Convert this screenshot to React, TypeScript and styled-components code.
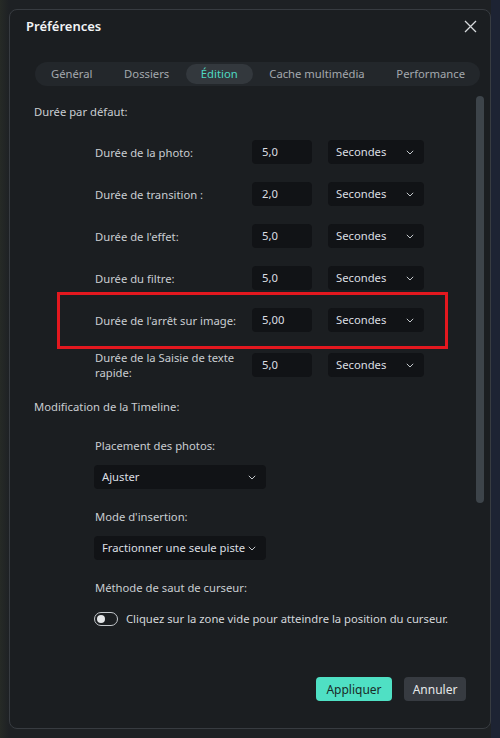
import { FC } from "react";
import styled, { createGlobalStyle } from "styled-components";

const GlobalStyle = createGlobalStyle`
    html, body {
        margin: 0;
        padding: 0;
        background: linear-gradient(90deg, #262a26 0px, #1e2124 9px, #1e2124 491px, #1d2333 491px);
        font-family: "Noto Sans", "Open Sans", sans-serif;
    }
    * {
        box-sizing: border-box;
    }
`;

type Duration = {
    label: string;
    value: string;
    highlighted?: boolean;
};

const durations: Duration[] = [
    { label: "Durée de la photo:", value: "5,0" },
    { label: "Durée de transition :", value: "2,0" },
    { label: "Durée de l'effet:", value: "5,0" },
    { label: "Durée du filtre:", value: "5,0" },
    { label: "Durée de l'arrêt sur image:", value: "5,00", highlighted: true },
    { label: "Durée de la Saisie de texte rapide:", value: "5,0" },
];

const tabs = ["Général", "Dossiers", "Édition", "Cache multimédia", "Performance"];

const Chevron: FC = () => (
    <svg width="8" height="5" viewBox="0 0 8 5" fill="none">
        <path d="M0.8 0.8 L4 4 L7.2 0.8" stroke="#c4c8cc" strokeWidth="1" />
    </svg>
);

const App: FC = () => {
    return (
        <>
            <GlobalStyle />
            <Page>
                <Dialog>
                    <Header>
                        <Title>Préférences</Title>
                        <CloseButton aria-label="Fermer">
                            <svg width="13" height="13" viewBox="0 0 13 13">
                                <path
                                    d="M1 1 L12 12 M12 1 L1 12"
                                    stroke="#d6d9dc"
                                    strokeWidth="1.3"
                                />
                            </svg>
                        </CloseButton>
                    </Header>

                    <TabBar>
                        {tabs.map((tab) => (
                            <Tab key={tab} $active={tab === "Édition"}>
                                {tab}
                            </Tab>
                        ))}
                    </TabBar>

                    <Body>
                        <Content>
                            <SectionTitle>Durée par défaut:</SectionTitle>
                            <DurationList>
                                {durations.map((d) => (
                                    <DurationRow key={d.label} $highlighted={d.highlighted}>
                                        <DurationLabel>{d.label}</DurationLabel>
                                        <NumberInput>{d.value}</NumberInput>
                                        <SmallSelect>
                                            <span>Secondes</span>
                                            <Chevron />
                                        </SmallSelect>
                                    </DurationRow>
                                ))}
                            </DurationList>

                            <SectionTitle $spaced>Modification de la Timeline:</SectionTitle>
                            <Field $first>
                                <FieldLabel>Placement des photos:</FieldLabel>
                                <WideSelect>
                                    <span>Ajuster</span>
                                    <Chevron />
                                </WideSelect>
                            </Field>
                            <Field>
                                <FieldLabel>Mode d'insertion:</FieldLabel>
                                <WideSelect>
                                    <span>Fractionner une seule piste</span>
                                    <Chevron />
                                </WideSelect>
                            </Field>
                            <Field>
                                <FieldLabel>Méthode de saut de curseur:</FieldLabel>
                                <ToggleRow>
                                    <Toggle />
                                    <span>Cliquez sur la zone vide pour atteindre la position du curseur.</span>
                                </ToggleRow>
                            </Field>
                        </Content>
                        <ScrollTrack>
                            <ScrollThumb />
                        </ScrollTrack>
                    </Body>

                    <Footer>
                        <PrimaryButton>Appliquer</PrimaryButton>
                        <SecondaryButton>Annuler</SecondaryButton>
                    </Footer>
                </Dialog>
            </Page>
        </>
    );
};

export default App;

const Page = styled.div`
    width: 500px;
    height: 738px;
    padding: 9px;
`;

const Dialog = styled.div`
    width: 482px;
    height: 720px;
    background: #1b1e21;
    border: 1px solid #383c41;
    border-radius: 8px;
    display: flex;
    flex-direction: column;
    color: #c9cdd1;
    font-size: 11.25px;
    line-height: 16px;
`;

const Header = styled.div`
    height: 32px;
    display: flex;
    align-items: center;
    justify-content: space-between;
    padding: 0 12px 0 16px;
`;

const Title = styled.div`
    font-size: 13px;
    font-weight: 600;
    color: #f1f3f5;
`;

const CloseButton = styled.button`
    background: none;
    border: none;
    padding: 0;
    width: 16px;
    height: 16px;
    display: flex;
    align-items: center;
    justify-content: center;
`;

const TabBar = styled.div`
    margin: 20px 10px 0 25px;
    height: 24px;
    background: #23272b;
    border-radius: 12px;
    display: flex;
    align-items: center;
    justify-content: space-between;
    padding: 0 0 0 1px;
`;

const Tab = styled.div<{ $active?: boolean }>`
    height: 20px;
    padding: 0 15px;
    border-radius: 10px;
    display: flex;
    align-items: center;
    white-space: nowrap;
    color: ${(p) => (p.$active ? "#4fd9c4" : "#a3a9ae")};
    background: ${(p) => (p.$active ? "#33383d" : "transparent")};
`;

const Body = styled.div`
    flex: 1;
    display: flex;
    padding-top: 10px;
`;

const Content = styled.div`
    flex: 1;
    padding-left: 24px;
`;

const SectionTitle = styled.div<{ $spaced?: boolean }>`
    margin-top: ${(p) => (p.$spaced ? "19px" : "8px")};
    color: #c9cdd1;
`;

const DurationList = styled.div`
    margin-top: 20px;
    display: flex;
    flex-direction: column;
    align-items: flex-start;
    gap: 18px;
    padding-left: 61px;
`;

const DurationRow = styled.div<{ $highlighted?: boolean }>`
    position: relative;
    display: grid;
    grid-template-columns: 141px 60px 96px;
    column-gap: 16px;
    align-items: center;

    &::before {
        content: "";
        display: ${(p) => (p.$highlighted ? "block" : "none")};
        position: absolute;
        top: -16px;
        bottom: -17px;
        left: -38px;
        right: -24px;
        border: 3px solid #e3181f;
        pointer-events: none;
    }
`;

const DurationLabel = styled.div`
    line-height: 15px;
`;

const NumberInput = styled.div`
    height: 24px;
    background: #111316;
    border-radius: 4px;
    padding: 0 10px;
    display: flex;
    align-items: center;
    color: #dcdfe2;
`;

const SmallSelect = styled.div`
    height: 24px;
    background: #111316;
    border-radius: 4px;
    padding: 0 10px 0 8px;
    display: flex;
    align-items: center;
    justify-content: space-between;
    white-space: nowrap;
    color: #dcdfe2;
`;

const Field = styled.div<{ $first?: boolean }>`
    margin-top: ${(p) => (p.$first ? "23px" : "20px")};
    padding-left: 60px;
`;

const FieldLabel = styled.div`
    padding-left: 1px;
`;

const WideSelect = styled(SmallSelect)`
    width: 172px;
    margin-top: 11px;
`;

const ToggleRow = styled.div`
    margin-top: 15px;
    display: flex;
    align-items: center;
    gap: 8px;
    color: #d4d7db;
`;

const Toggle = styled.div`
    width: 24px;
    height: 14px;
    border: 1.5px solid #c4c8cc;
    border-radius: 7px;
    display: flex;
    align-items: center;
    padding-left: 2px;

    &::after {
        content: "";
        width: 8px;
        height: 8px;
        border-radius: 50%;
        background: #e4e6e8;
    }
`;

const ScrollTrack = styled.div`
    width: 8px;
    margin-right: 6px;
`;

const ScrollThumb = styled.div`
    width: 8px;
    height: 407px;
    border-radius: 4px;
    background: #3d444a;
`;

const Footer = styled.div`
    display: flex;
    justify-content: flex-end;
    gap: 12px;
    padding: 0 24px 27px;
`;

const PrimaryButton = styled.button`
    height: 24px;
    width: 76px;
    border: none;
    border-radius: 4px;
    background: #4fe0c4;
    color: #1a2b28;
    font-family: inherit;
    font-size: 12px;
`;

const SecondaryButton = styled(PrimaryButton)`
    width: 62px;
    background: #373b41;
    color: #e6e8ea;
`;
